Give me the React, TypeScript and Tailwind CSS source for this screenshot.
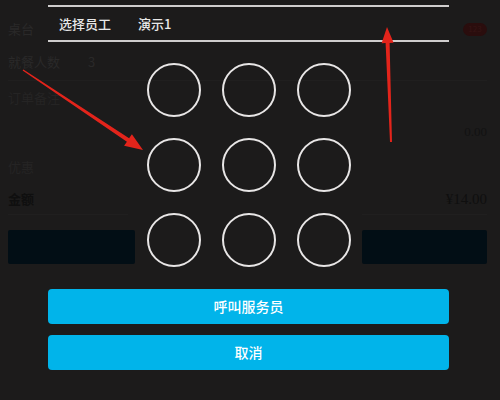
import React from 'react';

const font = { fontFamily: '"Noto Sans CJK SC", "Noto Sans", sans-serif' };

function BackgroundPage() {
  // the dimmed order page that sits under the modal
  return (
    <div className="flex flex-col pl-2 pr-[13px] pt-[14px] text-[13px]">
      <div className="flex h-[30px] items-center justify-between">
        <span className="text-[#2a2929]">桌台</span>
        <span className="flex h-[13px] w-[24px] items-center justify-center rounded-full bg-[#2a0d0d] text-[8px] text-[#361414]">
          123
        </span>
      </div>
      <div className="mt-[3px] flex h-[30px] items-center text-[#2a2929]">
        <span className="w-[80px]">就餐人数</span>
        <span>3</span>
      </div>
      <div className="mt-[3px] h-px bg-[#201f1f]" />
      <div className="flex h-[33px] items-center text-[#252424]">订单备注</div>
      <div className="flex h-[35px] items-center justify-end text-[#121212]">
        <span style={{ fontFamily: '"Liberation Serif", serif' }}>0.00</span>
      </div>
      <div className="flex h-[35px] items-center text-[#252424]">优惠</div>
      <div className="flex h-[30px] items-center justify-between text-[#0f0f0f]">
        <span className="font-bold">金额</span>
        <span className="text-[15px]" style={{ fontFamily: '"Liberation Serif", serif' }}>¥14.00</span>
      </div>
      <div className="flex justify-between">
        <div className="h-px w-[120px] bg-[#201f1f]" />
        <div className="h-px w-[125px] bg-[#201f1f]" />
      </div>
      <div className="mt-[15px] flex justify-between">
        <div className="h-[34px] w-[127px] rounded-[2px] bg-[#020e15]" />
        <div className="h-[34px] w-[125px] rounded-[2px] bg-[#020e15]" />
      </div>
    </div>
  );
}

function Circle() {
  return <div className="h-[54px] w-[54px] rounded-full border-2 border-[#e8e6e6]" />;
}

function Modal() {
  return (
    <div className="mx-[48px] flex w-[401px] flex-col pt-[5px]">
      <div className="h-[2px] bg-[#cfcdcd]" />
      <div className="flex h-[33px] items-center pl-[11px] text-[13px] font-medium text-[#e8e8e8]">
        <span className="w-[79px]">选择员工</span>
        <span>演示1</span>
      </div>
      <div className="h-[2px] bg-[#cfcdcd]" />
      <div className="mt-[21px] flex justify-center">
        <div className="grid grid-cols-3 gap-[21px]">
          {Array.from({ length: 9 }).map((_, i) => (
            <Circle key={i} />
          ))}
        </div>
      </div>
      <button className="mt-[22px] h-[35px] rounded-[4px] bg-[#01b4ea] text-[14px] font-medium text-white">
        呼叫服务员
      </button>
      <button className="mt-[11px] h-[35px] rounded-[4px] bg-[#01b4ea] text-[14px] font-medium text-white">
        取消
      </button>
    </div>
  );
}

export default function App() {
  return (
    <div className="relative h-[400px] w-[500px] overflow-hidden bg-[#1c1b1b]" style={font}>
      <BackgroundPage />
      <div className="absolute inset-0">
        <Modal />
      </div>
      {/* red annotation arrows */}
      <svg className="pointer-events-none absolute inset-0" width="500" height="400" viewBox="0 0 500 400">
        <polygon
          fill="#e3241b"
          points="23.4,69.4 129.1,138.3 131.9,134.2 143,150 124.1,145.8 126.9,141.7 22.6,70.6"
        />
        <polygon
          fill="#e3241b"
          points="390,142 385.6,43.1 381.6,43.2 387,27 393.6,42.8 389.6,42.9 392,142"
        />
      </svg>
    </div>
  );
}
